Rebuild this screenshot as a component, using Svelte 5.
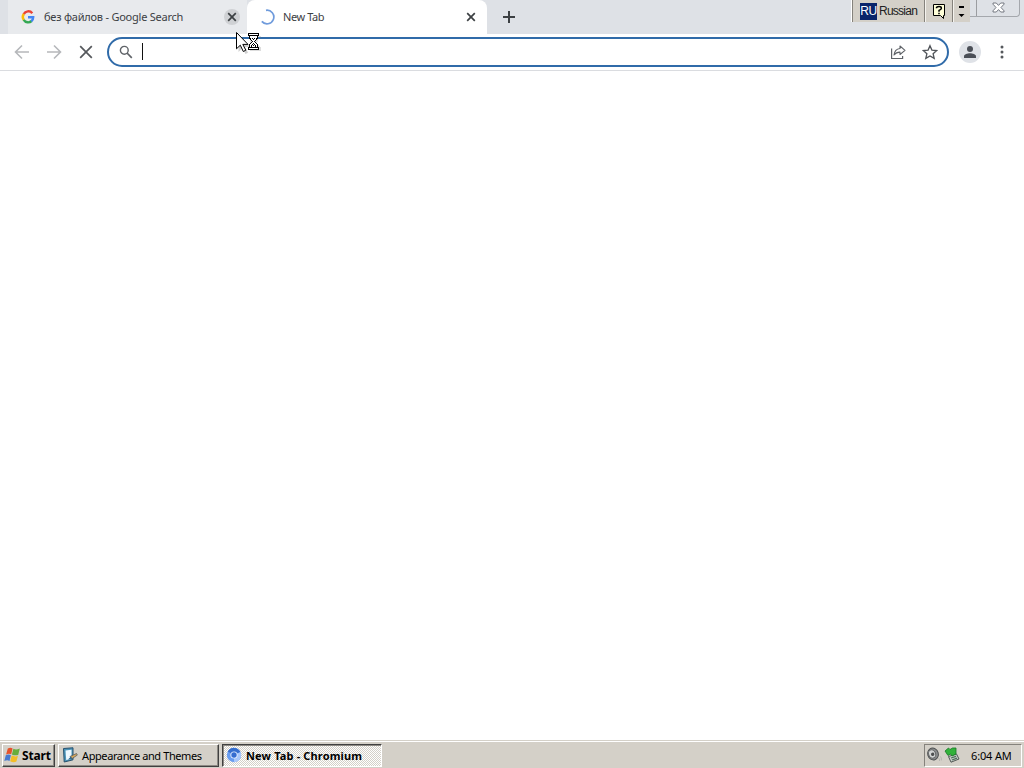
<script lang="ts">
  type Tab = { title: string; active: boolean; loading: boolean };

  let tabs: Tab[] = $state([
    { title: 'без файлов - Google Search', active: false, loading: false },
    { title: 'New Tab', active: true, loading: true }
  ]);
  let query = $state('');
  const clock = '6:04 AM';
</script>

<div class="desktop">
  <header class="tabstrip">
    {#each tabs as tab (tab.title)}
      <div class="tab" class:active={tab.active}>
        {#if tab.loading}
          <svg class="favicon" viewBox="0 0 16 16">
            <path d="M7 1.3A6.8 6.8 0 1 1 2.8 12.4" fill="none" stroke="#6f9bdc" stroke-width="1.7" />
          </svg>
        {:else}
          <svg class="favicon" viewBox="0 0 16 16">
            <g fill="none" stroke-width="2.4">
              <path d="M12.3 4.2A5.2 5.2 0 0 0 3.7 5.1" stroke="#ea4335" />
              <path d="M3.8 5A5.2 5.2 0 0 0 3.8 11" stroke="#fbbc05" />
              <path d="M3.7 10.9A5.2 5.2 0 0 0 11.6 12" stroke="#34a853" />
              <path d="M11.3 12.2Q13.2 10.8 13.2 8.2H8" stroke="#4285f4" />
            </g>
          </svg>
        {/if}
        <span class="tab-title">{tab.title}</span>
        <button class="tab-close" aria-label="Close tab">
          <svg width="16" height="16" viewBox="0 0 16 16">
            <path d="M4.2 4.2l7.6 7.6M11.8 4.2l-7.6 7.6" stroke="#3c4043" stroke-width="1.7" />
          </svg>
        </button>
      </div>
    {/each}
    <button class="new-tab" aria-label="New tab">
      <svg width="14" height="14" viewBox="0 0 14 14">
        <path d="M7 1v12M1 7h12" stroke="#3c4043" stroke-width="2" />
      </svg>
    </button>

    <div class="caption-buttons">
      <div class="window-max"></div>
      <div class="window-close">
        <svg width="13" height="11" viewBox="0 0 13 11">
          <path
            d="M1 1h3.300L6.500 3.400 8.700 1H12v1.200L9 5.500l3 3.300V10H8.700L6.500 7.600 4.300 10H1V8.800l3-3.300-3-3.300z"
            fill="#fff"
            stroke="#666b75"
            stroke-width=".9"
          />
        </svg>
      </div>
    </div>
  </header>

  <div class="langbar">
    <div class="lang"><span class="code">RU</span><span>Russian</span></div>
    <div class="help">
      <svg width="14" height="17" viewBox="0 0 14 17">
        <path d="M1.500 1.500h11v11h-1v3l-3-3h-7z" fill="#ffffd8" stroke="#000" />
        <path
          d="M4.500 5.200V4.500Q4.700 3.500 7 3.500t2.400 1.700Q9.400 6.300 7 7.400v1.300M7 9.700v1.600"
          fill="none"
          stroke="#000"
          stroke-width="1.500"
        />
      </svg>
    </div>
    <div class="options">
      <svg width="9" height="14" viewBox="0 0 9 14">
        <path d="M2 2h5v2H2zM1.500 10h6l-3 3z" />
      </svg>
    </div>
  </div>

  <nav class="toolbar">
    <button class="nav" aria-label="Back">
      <svg width="16" height="16" viewBox="0 0 16 16">
        <path d="M15 8H2M8 1.500L1.500 8 8 14.500" fill="none" stroke="#b6b8bb" stroke-width="1.600" />
      </svg>
    </button>
    <button class="nav" aria-label="Forward">
      <svg width="16" height="16" viewBox="0 0 16 16">
        <path d="M1 8h13M8 1.500L14.500 8 8 14.500" fill="none" stroke="#b6b8bb" stroke-width="1.600" />
      </svg>
    </button>
    <button class="nav" aria-label="Stop">
      <svg width="16" height="16" viewBox="0 0 16 16">
        <path d="M2.200 2.200l11.600 11.600M13.800 2.200L2.200 13.800" stroke="#55585c" stroke-width="1.700" />
      </svg>
    </button>
    <div class="omnibox">
      <svg width="14" height="14" viewBox="0 0 14 14">
        <circle cx="5.300" cy="5.300" r="3.900" fill="none" stroke="#5f6368" stroke-width="1.400" />
        <path d="M8 8l4.800 4.800" stroke="#5f6368" stroke-width="1.700" />
      </svg>
      <div class="query">{query}<span class="caret"></span></div>
      <svg width="16" height="16" viewBox="0 0 16 16">
        <path d="M1.600 4.500v10h11v-2.600" fill="none" stroke="#5f6368" stroke-width="1.200" />
        <path
          d="M10 2l5 4.300-5 4.200V8.100Q6.300 8 4 11 4.700 5.200 10 4.500z"
          fill="none"
          stroke="#5f6368"
          stroke-width="1.100"
          stroke-linejoin="round"
        />
      </svg>
      <svg width="16" height="16" viewBox="0 0 16 16">
        <path
          d="M8 1.700l1.900 4.400 4.800.4-3.600 3.200 1.100 4.700L8 11.900l-4.200 2.500 1.100-4.700-3.600-3.200 4.800-.4z"
          fill="none"
          stroke="#505459"
          stroke-width="1.300"
        />
      </svg>
    </div>
    <div class="avatar">
      <svg width="14" height="14" viewBox="0 0 14 14">
        <circle cx="7" cy="4" r="3" fill="#4b4f57" />
        <path d="M1 13v-1.600C1 9.300 4.500 8.300 7 8.300s6 1 6 3.100V13z" fill="#4b4f57" />
      </svg>
    </div>
    <svg class="menu" width="4" height="16" viewBox="0 0 4 16" fill="#55585c">
      <circle cx="2" cy="3" r="1.500" />
      <circle cx="2" cy="8" r="1.500" />
      <circle cx="2" cy="13" r="1.500" />
    </svg>
  </nav>

  <main></main>

  <footer class="taskbar">
    <button class="task start">
      <svg width="17" height="16" viewBox="0 0 17 16">
        <path d="M3.800 1.500Q6.300 0 8.600 1.400L7.200 7.200Q4.900 6 2.100 7.400z" fill="#e5532b" />
        <path d="M9.400 1.800Q12 3.200 15.800 1.600L14.200 7.900Q11 9 7.900 7.500z" fill="#69ad3c" />
        <path d="M1.800 8.300Q4.600 7 6.900 8.200L5.500 13.900Q3 12.700.3 14.100z" fill="#4679cf" />
        <path d="M7.700 8.600Q11 10 13.900 8.900l-1.500 5.700Q9.500 15.900 6.200 14.300z" fill="#f4bd27" />
      </svg>
      <span>Start</span>
    </button>
    <button class="task appearance">
      <svg width="16" height="16" viewBox="0 0 16 16">
        <path d="M1.500 1.500L11 .8v12L2.200 15z" fill="#4c95b9" stroke="#28506c" />
        <path d="M3.500 3.500l6-.8v9l-5.300 1.200z" fill="#eff9ff" />
        <path d="M8 9.500l6.500-3 .8 1.600L9.500 12z" fill="#d7a95c" stroke="#4a5059" stroke-width=".7" />
        <path d="M6 12.500l3-3 1.200 2z" fill="#27618b" />
      </svg>
      <span>Appearance and Themes</span>
    </button>
    <button class="task chromium">
      <svg width="16" height="16" viewBox="0 0 16 16">
        <circle cx="8" cy="8" r="7.200" fill="#699df0" />
        <path d="M8 8L1.800 4.400A7.200 7.200 0 0 1 14.500 5z" fill="#366fcf" />
        <path d="M8 8l6.500-3A7.200 7.200 0 0 1 8 15.200z" fill="#a8c7fa" />
        <circle cx="8" cy="8" r="3.600" fill="#e8f0fe" />
        <circle cx="8" cy="8" r="2.700" fill="#356dd0" />
      </svg>
      <span>New Tab - Chromium</span>
    </button>
    <div class="tray">
      <svg width="16" height="16" viewBox="0 0 16 16">
        <g transform="rotate(-18 7 7)">
          <ellipse cx="7" cy="7" rx="5.300" ry="6" fill="#8b8d8e" stroke="#4d4f50" />
          <ellipse cx="6.200" cy="6.700" rx="3.500" ry="4.300" fill="#d3d5d4" stroke="#656768" />
          <circle cx="6.600" cy="7.200" r="1.700" fill="#4c4e4f" />
        </g>
        <path d="M12.500 11Q14 12 13.500 14M14.500 9.500Q16 11.500 15.300 13.500" fill="none" stroke="#aaa" stroke-width=".7" />
      </svg>
      <svg width="16" height="16" viewBox="0 0 16 16">
        <path d="M4.500 9.500l8-2.500 2.500 5-8 3.200z" fill="#c7cdca" stroke="#515854" />
        <path d="M7 11l5-1.600M8 13l5-1.800" stroke="#4e6f58" stroke-width="1.300" />
        <path d="M1 4l3.500-3L6 2.500 8.500 1H12v6L8 9 6.500 7 4 8.500z" fill="#32b23a" stroke="#187726" stroke-width=".8" />
      </svg>
      <span class="clock">{clock}</span>
    </div>
  </footer>

  <svg class="cursor" width="26" height="24" viewBox="0 0 26 24">
    <path d="M2.500 3v17l4-4 3 6 2.500-1.300L9.200 15h5z" fill="#777" opacity=".35" />
    <path d="M.5.500v16.300l3.800-3.600 3 6.300 2.500-1.300-3-5.800H12z" fill="#fff" stroke="#000" />
    <g shape-rendering="crispEdges">
      <path d="M14 4h11v2h-2l-2 5 3 4h1v4H14z" fill="#777" opacity=".25" />
      <path d="M13 2h9v3l-3 4v1l3 4v3h-9v-3l3-4V9l-3-4z" fill="#fff" />
      <path d="M12 1h11v1H12zM12 3h11v1H12zM12 15h11v1H12zM12 17h11v1H12zM12 2h1v1h-1zM22 2h1v1h-1zM12 16h1v1h-1zM22 16h1v1h-1z" />
      <path d="M13 4h1v3h-1zM21 4h1v3h-1zM13 12h1v3h-1zM21 12h1v3h-1z" />
      <path d="M14 6h1v2h-1zM20 6h1v2h-1zM15 8h1v1h-1zM19 8h1v1h-1zM16 9h1v1h-1zM18 9h1v1h-1zM15 10h1v1h-1zM19 10h1v1h-1zM14 11h1v1h-1zM20 11h1v1h-1z" />
      <path d="M16 6h1v1h-1zM18 6h1v1h-1zM17 7h1v1h-1zM17 11h1v1h-1zM16 12h1v1h-1zM18 12h1v1h-1zM15 13h1v2h-1zM17 13h1v1h-1zM19 13h1v2h-1z" />
    </g>
  </svg>
</div>

<style>
  :global(body) {
    margin: 0;
    overflow: hidden;
  }
  .desktop {
    position: relative;
    display: flex;
    flex-direction: column;
    width: 1024px;
    height: 768px;
    background: #fff;
    font-family: 'Noto Sans', 'Open Sans', sans-serif;
    font-size: 11px;
    color: #3c4043;
  }
  button {
    display: flex;
    align-items: center;
    justify-content: center;
    border: 0;
    padding: 0;
    background: none;
    color: inherit;
    font: inherit;
  }
  svg {
    display: block;
    flex: none;
  }

  .tabstrip {
    display: flex;
    height: 34px;
    padding-left: 8px;
    background: #dee1e6;
  }
  .tab {
    box-sizing: border-box;
    display: flex;
    align-items: center;
    width: 239px;
    padding: 0 7px 0 12px;
    background: #e8eaed;
  }
  .tab.active {
    width: 240px;
    border-radius: 8px 8px 0 0;
    background: #fff;
  }
  .favicon {
    width: 16px;
    height: 16px;
  }
  .tab-title {
    flex: 1;
    margin-left: 8px;
    padding-bottom: 2px;
    white-space: nowrap;
    letter-spacing: -0.23px;
  }
  .active .tab-title {
    letter-spacing: -0.4px;
  }
  .tab-close {
    width: 16px;
    height: 16px;
    border-radius: 50%;
    background: #cfd1d4;
  }
  .active .tab-close {
    margin-right: 1px;
    background: none;
  }
  .new-tab {
    width: 28px;
    margin-left: 8px;
  }
  .caption-buttons {
    display: flex;
    box-sizing: border-box;
    width: 51px;
    height: 17px;
    margin-left: auto;
    margin-right: 4px;
    border: 1px solid #a5a8ad;
    border-top: 0;
    border-radius: 0 0 4px 0;
  }
  .window-max {
    width: 6px;
    border-right: 1px solid #9b9da1;
  }
  .window-close {
    flex: 1;
    display: flex;
    justify-content: center;
    padding-top: 2px;
  }

  .langbar {
    position: absolute;
    top: 0;
    left: 851px;
    display: flex;
    box-sizing: border-box;
    width: 119px;
    height: 22px;
    border-left: 1px solid #fff;
    background: #d4d0c8;
    font-family: 'Liberation Sans', sans-serif;
    font-size: 12px;
    color: #222;
  }
  .lang,
  .help {
    box-sizing: border-box;
    display: flex;
    align-items: center;
    border-right: 1px solid #85827c;
  }
  .lang {
    gap: 2px;
    width: 73px;
    padding-left: 7px;
    border-left: 1px solid #85827c;
    letter-spacing: -0.75px;
  }
  .code {
    width: 17px;
    height: 17px;
    line-height: 17px;
    text-align: center;
    background: #0a246a;
    color: #fff;
    letter-spacing: -0.4px;
  }
  .help {
    justify-content: center;
    width: 28px;
    border-left: 1px solid #f5f3ee;
  }
  .options {
    flex: 1;
    display: flex;
    padding: 4px 0 0 3px;
    border-left: 1px solid #f5f3ee;
  }

  .toolbar {
    box-sizing: border-box;
    display: flex;
    align-items: center;
    height: 37px;
    padding-left: 6px;
    border-bottom: 1px solid #dadce0;
  }
  .nav {
    width: 32px;
    height: 32px;
  }
  .omnibox {
    box-sizing: border-box;
    display: flex;
    align-items: center;
    gap: 16px;
    width: 842px;
    height: 30px;
    margin-left: 5px;
    padding: 0 9px 0 10px;
    border: 2px solid #306ba9;
    border-radius: 15px;
  }
  .query {
    flex: 1;
    margin: 0 0 2px -7px;
  }
  .caret {
    display: block;
    width: 1px;
    height: 17px;
    background: #111;
  }
  .avatar {
    display: flex;
    align-items: center;
    justify-content: center;
    width: 22px;
    height: 22px;
    margin-left: 10px;
    border-radius: 50%;
    background: #dfe2e7;
  }
  .menu {
    margin-left: 19px;
  }

  main {
    flex: 1;
  }

  .taskbar {
    box-sizing: border-box;
    display: flex;
    align-items: center;
    height: 28px;
    padding: 1px 2px 0;
    border-top: 1px solid #d4d0c8;
    box-shadow: inset 0 1px #fff;
    background: #d4d0c8;
    color: #000;
  }
  .task {
    box-sizing: border-box;
    height: 23px;
    justify-content: flex-start;
    border: 1px solid;
    border-color: #fff #404040 #404040 #fff;
    box-shadow: inset -1px -1px #8d8a84;
    white-space: nowrap;
  }
  .start {
    width: 53px;
    padding-left: 1px;
    gap: 1px;
    font-weight: bold;
    font-size: 12px;
    letter-spacing: -0.15px;
  }
  .appearance {
    width: 161px;
    margin-left: 3px;
    padding-left: 3px;
    gap: 4px;
    letter-spacing: -0.4px;
  }
  .chromium {
    width: 160px;
    margin-left: 3px;
    padding-left: 3px;
    gap: 4px;
    border-color: #404040 #fff #fff #404040;
    box-shadow: inset 1px 1px #8d8a84;
    background: repeating-conic-gradient(#fff 0 25%, #d4d0c8 0 50%) 0 0 / 2px 2px;
    font-weight: bold;
    letter-spacing: 0.15px;
  }
  .tray {
    box-sizing: border-box;
    display: flex;
    align-items: center;
    width: 98px;
    height: 23px;
    margin-left: auto;
    padding-left: 1px;
    gap: 2px;
    border: 1px solid;
    border-color: #85827c #fff #fff #85827c;
  }
  .clock {
    margin-left: 9px;
    white-space: nowrap;
    letter-spacing: -0.15px;
  }

  .cursor {
    position: absolute;
    top: 32px;
    left: 236px;
  }
</style>
